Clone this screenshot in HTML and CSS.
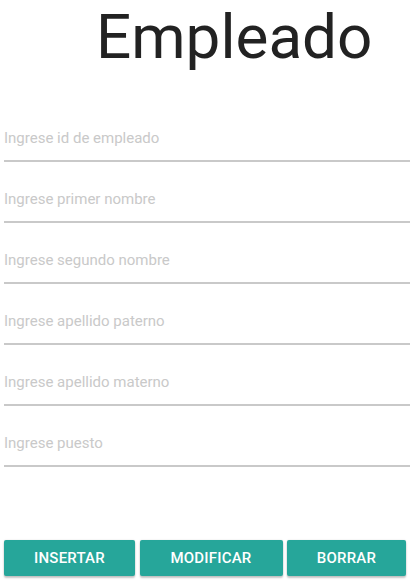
FILE: index.html
```html
<!DOCTYPE html>
<html lang="es">
<head>
<meta charset="utf-8">
<title>Empleado</title>
<link rel="stylesheet" href="styles.css">
</head>
<body>
<main class="screen">
  <h1 class="title">Empleado</h1>
  <form class="form">
    <input class="field" type="text" placeholder="Ingrese id de empleado">
    <input class="field" type="text" placeholder="Ingrese primer nombre">
    <input class="field" type="text" placeholder="Ingrese segundo nombre">
    <input class="field" type="text" placeholder="Ingrese apellido paterno">
    <input class="field" type="text" placeholder="Ingrese apellido materno">
    <input class="field" type="text" placeholder="Ingrese puesto">
  </form>
  <div class="actions">
    <button class="btn btn-insert" type="button">Insertar</button>
    <button class="btn btn-modify" type="button">Modificar</button>
    <button class="btn btn-delete" type="button">Borrar</button>
  </div>
</main>
</body>
</html>
```

FILE: styles.css
```css
html, body {
  margin: 0;
  padding: 0;
  background: #ffffff;
}

body {
  font-family: Roboto, "Noto Sans", "Liberation Sans", sans-serif;
  width: 410px;
  height: 588px;
  overflow: hidden;
}

.screen {
  display: flex;
  flex-direction: column;
}

.title {
  margin: 0 0 28px 0;
  padding-left: 96px;
  font-size: 62px;
  line-height: 73px;
  font-weight: 400;
  color: #222222;
  height: 73px;
}

.form {
  display: flex;
  flex-direction: column;
  margin: 0 0 0 4px;
}

.field {
  box-sizing: border-box;
  width: 406px;
  height: 61px;
  margin: 0;
  padding: 27px 0 12px 0;
  border: none;
  border-bottom: 2px solid #c9c9c9;
  outline: none;
  background: transparent;
  font-family: Roboto, "Noto Sans", "Liberation Sans", sans-serif;
  font-size: 15px;
  line-height: 20px;
  color: #222222;
}

.field::placeholder {
  color: #c9c9c9;
  opacity: 1;
}

.actions {
  display: flex;
  column-gap: 4.5px;
  margin: 73px 0 0 4px;
}

.btn {
  height: 36px;
  padding: 0;
  border: none;
  border-radius: 2px;
  background: #26a69a;
  color: #ffffff;
  font-family: Roboto, "Noto Sans", "Liberation Sans", sans-serif;
  font-size: 15px;
  font-weight: 500;
  text-transform: uppercase;
  letter-spacing: 0.2px;
  box-shadow: 0 2px 2px rgba(0, 0, 0, 0.22), 0 0 2px rgba(0, 0, 0, 0.12);
}

.btn-insert { width: 131px; }
.btn-modify { width: 143px; }
.btn-delete { width: 119px; }
```
